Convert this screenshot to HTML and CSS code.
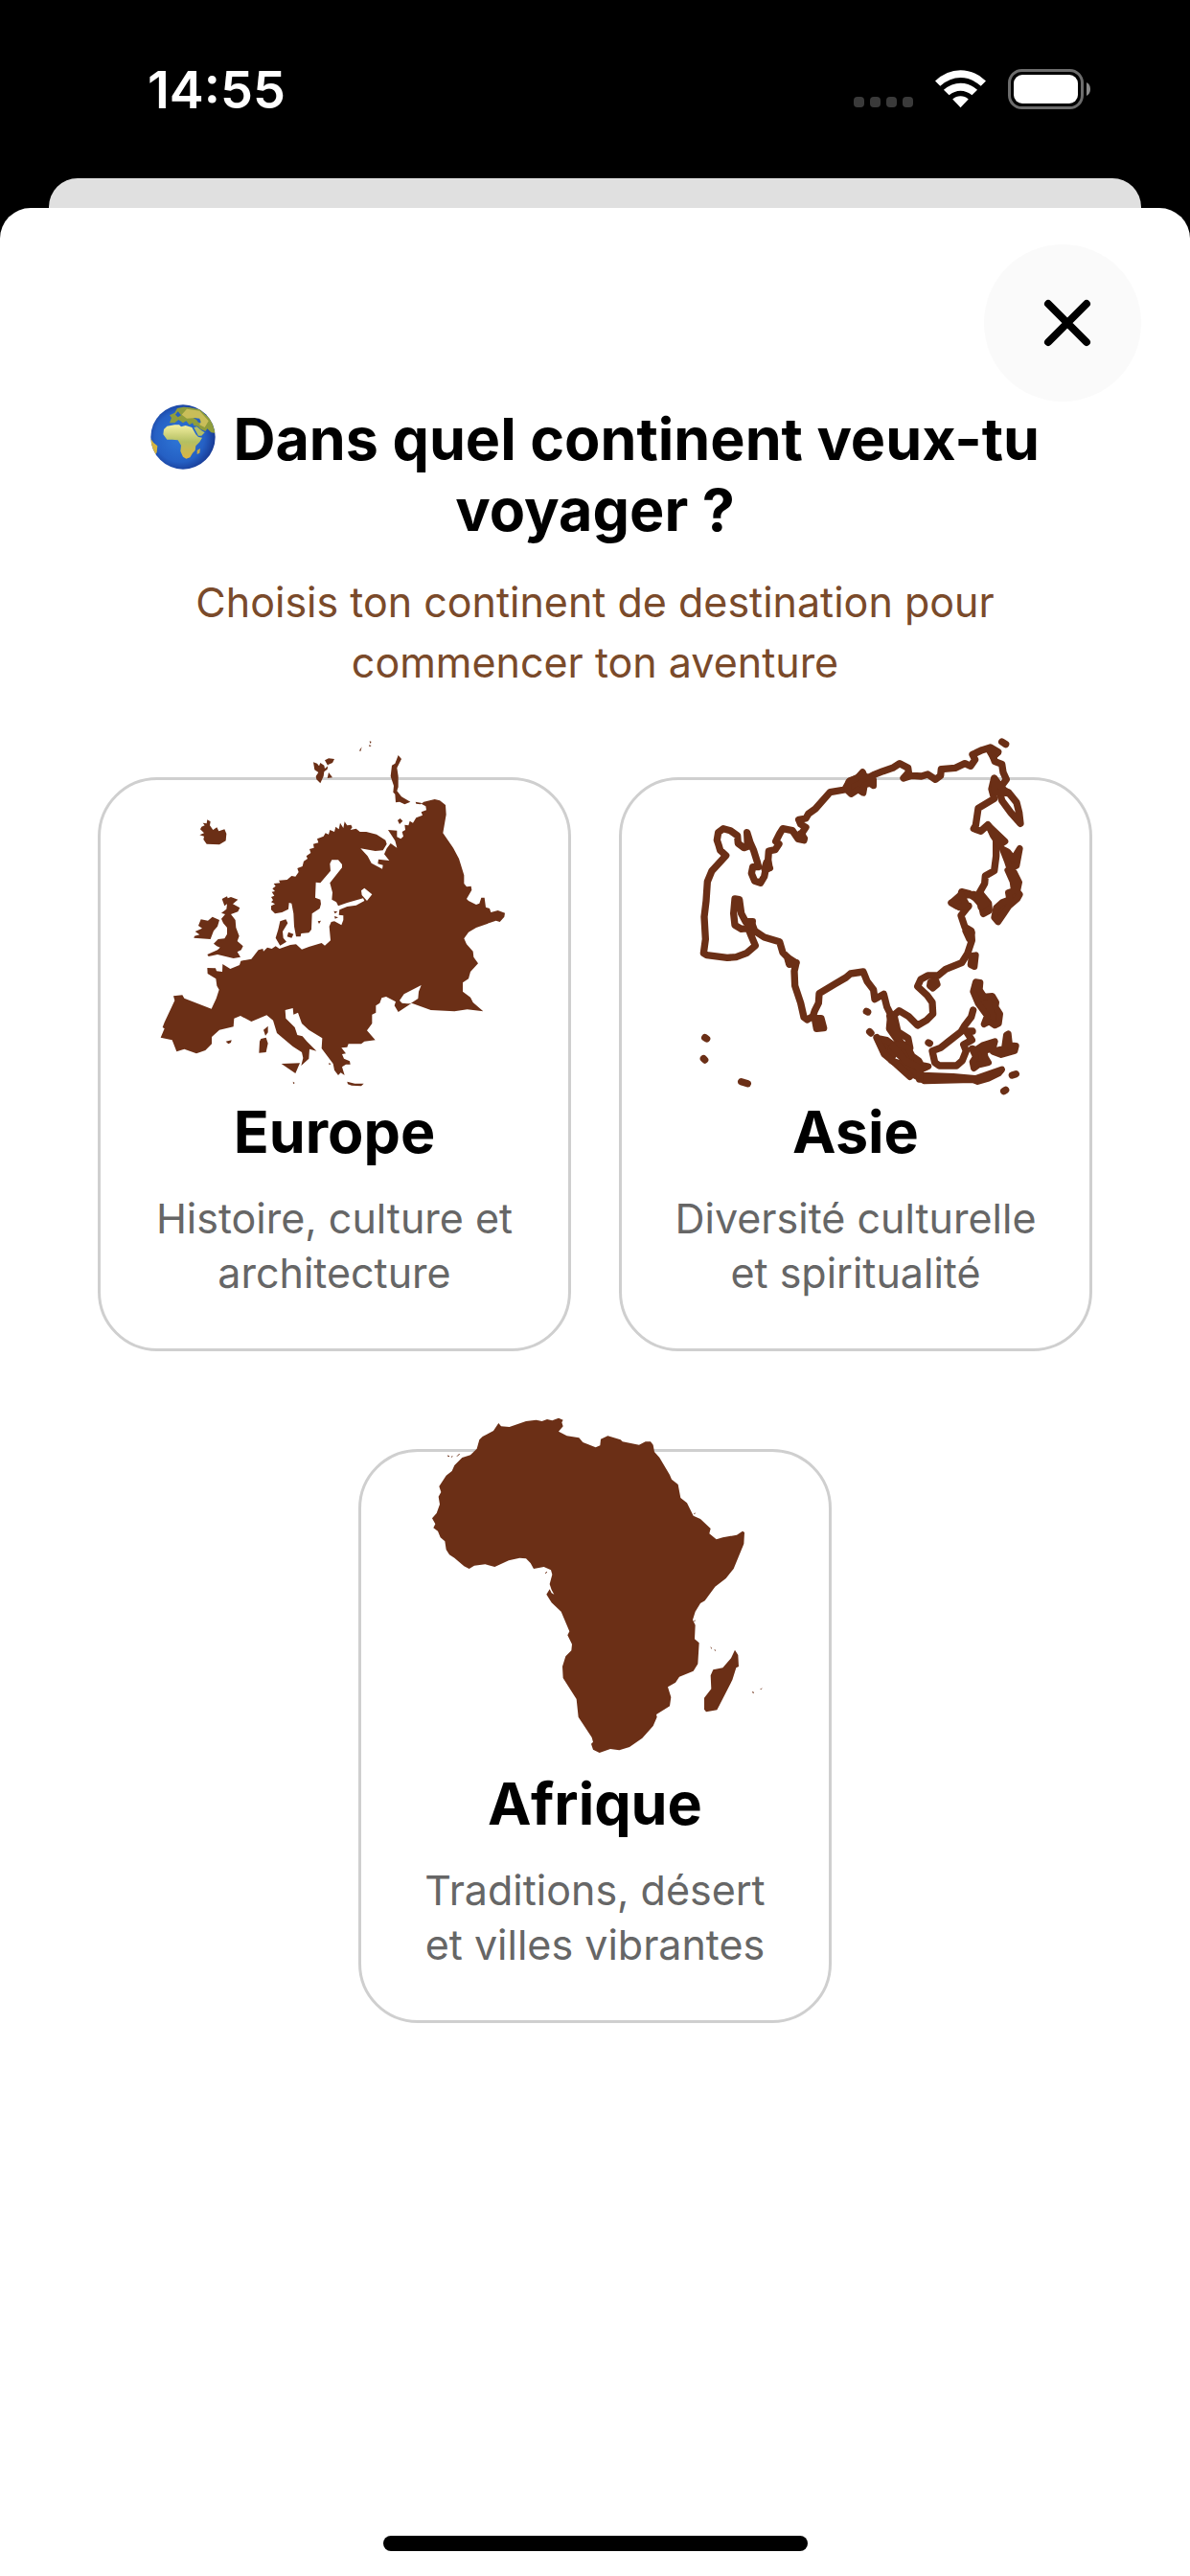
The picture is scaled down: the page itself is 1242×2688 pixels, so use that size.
FILE: index.html
```
<!DOCTYPE html>
<html lang="fr">
<head>
    <meta charset="UTF-8">
    <meta name="viewport" content="width=device-width, initial-scale=1">
    <title>Choix du continent</title>
    <link rel="stylesheet" href="styles.css">
</head>
<body>
<div class="status">
    <span class="time">14:55</span>
    <div class="status-icons">
        <svg class="dots" viewBox="0 0 62 42" aria-hidden="true">
            <rect x="0" y="29" width="11" height="11" rx="4"/>
            <rect x="17" y="29" width="11" height="11" rx="4"/>
            <rect x="34" y="29" width="11" height="11" rx="4"/>
            <rect x="51" y="29" width="11" height="11" rx="4"/>
        </svg>
        <svg class="wifi" viewBox="0 0 160 120" aria-hidden="true">
            <path d="M0 34Q36 0 80 0T160 34L144 50Q114 24 80 24T16 50Z"/>
            <path d="M27 62Q52 41 80 41T133 62L116 79Q99 65 80 65T44 79Z"/>
            <path d="M55 92Q66 82 80 82T105 92L80 118Z"/>
        </svg>
        <svg class="battery" viewBox="0 0 88 42" aria-hidden="true">
            <rect class="battery-frame" x="1.5" y="1.5" width="76" height="39" rx="13"/>
            <rect class="battery-level" x="6" y="6" width="67" height="30" rx="9"/>
            <path class="battery-cap" d="M82 14Q86 16 86 21T82 28Z"/>
        </svg>
    </div>
</div>
<div class="behind"></div>
<main class="sheet">
    <div class="sheet-top">
        <button class="close" type="button" aria-label="Fermer">
            <svg viewBox="0 0 164 164" aria-hidden="true">
                <path d="M67 62L107 102M107 62L67 102"/>
            </svg>
        </button>
    </div>
    <h1 class="title">
        <svg class="globe" viewBox="36 40 204 204" aria-hidden="true">
            <defs>
                <radialGradient id="sea" cx="0.45" cy="0.5" r="0.55">
                    <stop offset="0" stop-color="#2f78d8"/>
                    <stop offset="0.7" stop-color="#2560c4"/>
                    <stop offset="1" stop-color="#183a94"/>
                </radialGradient>
                <linearGradient id="land" x1="0" y1="0" x2="0" y2="1">
                    <stop offset="0" stop-color="#f3efa0"/>
                    <stop offset="0.5" stop-color="#b4bf62"/>
                    <stop offset="1" stop-color="#dcb543"/>
                </linearGradient>
                <clipPath id="disc"><circle cx="138" cy="142" r="101"/></clipPath>
            </defs>
            <circle cx="138" cy="142" r="101" fill="url(#sea)"/>
            <g clip-path="url(#disc)">
                <path fill="#8f9d3c" d="M96 98L102 82 96 74 112 66 120 52 140 48 160 50 190 56 226 88 240 130 226 128 214 116 208 124 194 118 184 108 172 106 168 98 158 104 148 92 138 98 124 88 112 98Z"/>
                <path fill="#c9be59" d="M150 54L190 60 218 92 206 112 190 104 194 90 176 82 150 84 134 72Z"/>
                <path fill="#2560c4" d="M170 82L190 84 194 98 186 96 180 88ZM122 62L132 74 122 80 114 72Z"/>
                <path fill="url(#land)" d="M88 108L112 104 126 104 132 110 146 106 166 112 178 134 186 142 198 144 190 158 178 170 176 184 168 192 160 206 148 210 138 204 130 186 132 168 122 152 104 150 88 150 76 134 78 118Z"/>
                <path fill="#b4bf62" d="M172 112L182 110 196 122 206 128 196 138 186 138Z"/>
                <path fill="#c9ab46" d="M182 184L192 178 190 192 182 196Z"/>
                <path fill="#d6b53f" d="M36 146L46 160 58 170 56 190 48 204 36 180Z"/>
            </g>
        </svg>
        Dans quel continent veux-tu voyager&nbsp;?
    </h1>
    <p class="subtitle">Choisis ton continent de destination pour commencer ton aventure</p>

    <div class="cards">
        <button class="card" type="button">
            <svg class="map" viewBox="0 0 1200 1155" aria-hidden="true">
                <!-- continent -->
                <path d="M96 838L124 835 130 845 215 878 230 846 239 818 232 806 229 784 203 768 202 750 228 751 231 760 249 762 250 738 274 753 303 741 307 728 340 722 362 694 376 690 378 698 390 686 404 690 416 682 428 690 462 678 480 676 498 692 520 684 560 672 570 680 588 664 584 620 590 606 600 604 622 616 628 600 628 586 614 584 616 568 640 558 668 554 694 540 690 532 640 546 612 556 606 544 592 536 594 514 586 484 624 436 624 426 612 412 592 412 586 424 588 446 556 484 542 482 540 530 556 536 558 550 554 564 530 580 528 630 520 640 496 642 494 652 480 652 474 620 472 580 466 548 458 546 456 566 436 576 414 580 402 568 402 556 414 550 402 544 408 538 402 528 412 524 404 512 414 510 406 502 416 494 410 486 430 484 426 476 452 474 466 462 478 464 488 450 484 438 500 432 504 416 516 408 512 400 526 390 522 378 536 374 534 362 550 358 546 346 566 338 572 328 582 332 586 318 600 324 604 308 614 316 618 296 628 312 632 292 640 304 652 302 656 310 650 318 668 314 680 324 700 324 732 332 760 350 764 362 752 382 728 384 682 376 704 400 716 422 750 440 752 428 736 424 738 410 772 414 756 394 764 376 776 360 796 374 790 352 768 318 796 320 796 340 808 346 816 338 812 324 822 318 820 302 832 304 836 290 846 296 856 280 876 272 872 262 888 256 886 244 872 236 880 230 914 222 930 226 948 240 950 270 940 328 972 374 990 408 1006 460 1006 486 1014 496 1028 494 1030 506 1014 534 1020 540 1044 552 1054 548 1060 530 1070 530 1074 560 1086 564 1090 576 1112 570 1134 578 1132 590 1118 606 1106 602 1044 624 1020 638 1006 658 1014 676 1034 698 1036 716 1050 736 1026 762 1020 784 1002 796 1002 824 1026 842 1034 858 1066 886 1016 880 976 886 902 882 842 860 800 888 788 868 792 856 762 840 748 844 742 860 730 868 730 890 718 896 718 924 702 946 728 976 694 980 684 988 644 988 640 998 622 1000 636 1018 624 1020 630 1034 648 1042 650 1052 636 1052 624 1060 632 1086 620 1078 612 1086 600 1070 596 1050 560 1002 562 970 520 944 498 924 486 890 472 896 470 876 446 882 448 908 476 936 484 960 500 964 514 980 544 1010 522 1004 520 1034 496 1056 502 1032 498 1014 470 996 420 954 408 914 388 898 340 918 306 900 286 908 284 934 240 944 216 966 216 988 196 1008 168 1018 130 1004 106 1012 92 976 56 968 68 940 62 936 68 920 100 852Z"/>
                <!-- islands and northern seas -->
                <path d="M184 308L194 304 188 296 200 298 202 286 212 292 210 304 220 318 232 310 238 322 256 316 262 330 260 352 240 364 200 362 190 348 192 338 178 334 192 328 180 316Z"/>
                <path d="M534 106L546 110 552 118 556 108 568 116 570 126 580 118 570 100 582 94 600 96 594 108 580 114 578 128 568 136 566 150 556 172 544 160 542 150 550 138 538 130ZM582 138L594 154 578 156ZM678 70L686 58 682 72ZM710 40L716 42 712 48ZM708 52L716 54 710 58Z"/>
                <path d="M800 84L810 96 796 124 800 150 800 184 796 196 810 214 838 230 820 238 804 230 792 232 790 206 784 200 786 180 776 150 780 116 790 110ZM854 230L874 234 870 238 856 236ZM798 288L806 282 814 290 804 300Z"/>
                <path d="M248 534L264 526 266 532 276 528 298 536 282 550 304 562 298 574 276 582 290 600 292 624 302 650 296 666 314 682 308 694 296 700 306 716 284 720 234 708 206 714 202 708 234 694 242 686 232 682 222 674 236 660 256 658 264 644 264 624 252 610 246 596 258 582 246 578 262 566 264 550 256 556Z"/>
                <path d="M182 598L204 602 218 590 240 600 234 620 222 634 212 660 160 656 162 650 178 646 164 636 186 626 174 618Z"/>
                <path d="M430 604L448 598 454 610 438 636 440 656 450 668 430 680 416 656 424 630ZM456 638L472 644 466 656 452 652ZM548 604L558 602 552 612ZM598 572L610 574 602 580ZM600 588L612 592 602 596Z"/>
                <path d="M378 944L392 932 392 952 384 962ZM370 972L386 968 392 986 386 1014 364 1016 366 980ZM260 980L278 976 276 984 268 988ZM434 1050L492 1048 478 1080ZM470 1106L476 1110 472 1114ZM640 1106L664 1112 692 1112 684 1120 654 1118 642 1114ZM582 1048L590 1050 584 1054Z"/>
                <path class="water" d="M684 508L694 500 718 520 702 540 686 522ZM804 852L818 832 872 804 864 824 862 846 838 862 828 862 812 860Z"/>
            </svg>
            <span class="card-title">Europe</span>
            <span class="card-text">Histoire, culture et architecture</span>
        </button>

        <button class="card" type="button">
            <svg class="map map-outline" viewBox="-26 0 1200 1155" aria-hidden="true">
                <!-- mainland coast, from the Black Sea eastwards -->
                <path d="M168 398L150 382 146 368 140 350 144 326 160 314 182 320 204 336 206 360 224 374 236 370 234 326 244 358 254 380 266 418 270 434 252 434 248 454 258 478 276 484 288 464 292 444 304 436 300 412 302 384 322 380 334 362 324 354 336 330 346 314 376 320 394 346 412 350 406 328 418 310 402 300 396 286 418 282 426 268 448 252 494 200 540 192 556 164 580 156 596 138 604 160 630 146 660 134 690 124 712 110 738 124 740 138 724 156 750 148 780 150 800 144 824 160 840 148 842 128 886 124 916 110 934 118 948 98 940 82 970 68 996 60 1020 74 1004 88 1010 104 1032 112 1036 138 1046 160 1028 184 1008 156 1000 190 1008 220 958 250 950 304 944 314 966 322 988 302 1014 344 1014 400 1008 446 980 462 978 486 962 514 990 548 992 570 974 580 968 552 950 532 930 518 906 512 902 534 874 546 900 560 928 556 904 586 916 622 936 634 938 664 924 706 906 734 856 754 832 774 800 774 778 786 768 808 798 836 814 858 816 894 796 914 768 930 740 902 710 884 694 898 706 950 738 970 744 1000 730 996 708 980 680 940 684 896 672 872 662 832 634 848 630 818 610 792 598 762 558 768 544 780 510 800 460 830 458 860 446 884 440 902 422 912 412 904 402 860 384 806 382 760 388 734 366 738 360 716 346 702 336 668 288 654 258 634 248 608 230 606 216 580 210 536 196 534 192 580 196 616 216 628 238 626 244 642 260 680 232 704 200 716 172 718 108 710 98 704 104 660 100 590 106 540 110 480 124 446Z"/>
                <path d="M446 908L452 940 474 938 466 908ZM1022 190L1032 226 1060 264 1090 298 1086 264 1078 232 1052 200ZM900 536L916 522 944 520"/>
                <!-- Severnaya coast and Kamchatka, thick spots -->
                <path class="solid" d="M552 168L594 146 630 160 630 180 618 172 602 178 598 202 582 192 560 206 550 196ZM990 66L1020 76 1004 90ZM1008 164L1030 184 1052 204 1010 200ZM990 304L1042 354 1024 366 1004 336ZM874 546L904 520 926 560 890 556ZM294 420L306 438 288 440ZM400 330L414 344 396 344ZM232 604L252 604 248 622ZM958 520L984 546 966 560ZM360 716L388 734 368 740ZM680 900L694 950 720 990 704 960ZM918 634L938 640 930 660Z"/>
                <!-- Japan, Taiwan -->
                <path class="solid" d="M1034 378L1050 386 1068 408 1088 376 1078 430 1056 438 1048 414ZM1050 444L1070 450 1086 482 1080 510 1088 520 1080 534 1054 556 1038 580 1020 606 1008 592 1014 562 1034 544 1056 536 1052 514 1070 508 1066 480ZM938 712L950 710 946 746 934 740ZM808 794L826 790 830 802 816 814 806 806Z"/>
                <path d="M1032 42L1044 50"/>
                <!-- Philippines, Borneo, Sumatra, Java -->
                <path class="solid" d="M950 794L964 796 962 818 976 840 1002 838 1014 858 1012 872 1026 894 1022 924 1010 930 992 918 976 926 986 900 958 862 942 824ZM642 970L672 976 690 990 712 988 738 1000 752 1026 772 1040 780 1054 802 1058 784 1066 760 1056 730 1040 706 1020 684 1004 690 1028 664 1018ZM938 1002L952 1006 972 992 1010 980 1004 1002 976 1010 980 1030 990 1046 958 1054 944 1064 940 1044 950 1028ZM686 1040L712 1048 744 1070 784 1086 880 1090 950 1096 1032 1068 1022 1080 990 1096 956 1106 940 1100 790 1104 744 1078ZM1046 960L1052 956 1056 992 1076 994 1072 1010 1030 1022 1004 1012 1040 1002Z"/>
                <path d="M942 882L936 904 916 930 904 950 868 978 840 1000 814 1010 822 1046 836 1056 890 1056 908 1040 920 1010 912 990 938 976 920 948 940 948M640 968L664 1020 700 1050 744 1090M690 996L730 1040 776 1064 774 1098"/>
                <path d="M102 968L108 972M98 1034L102 1038M216 1106L236 1112M608 886L612 888M618 950L622 954M802 984L806 986M1064 1086L1076 1082M1038 1136L1044 1132"/>
            </svg>
            <span class="card-title">Asie</span>
            <span class="card-text">Diversité culturelle et spiritualité</span>
        </button>

        <button class="card" type="button">
            <svg class="map" viewBox="0 0 1200 1155" aria-hidden="true">
                <path d="M298 72L306 82 332 84 384 66 416 62 434 66 450 60 466 64 486 56 500 62 496 70 500 82 486 98 512 112 550 118 562 132 602 148 616 142 618 122 640 112 680 124 686 130 738 140 758 130 774 130 782 140 786 162 802 180 834 234 840 248 860 264 868 306 888 322 908 362 930 372 962 402 958 418 980 436 1000 430 1044 422 1062 410 1068 414 1066 450 1034 528 1010 558 976 584 944 628 930 636 914 662 906 688 914 704 912 748 926 760 922 826 908 848 864 866 852 884 828 898 838 930 834 958 792 984 794 992 782 1020 748 1058 708 1086 676 1096 648 1092 614 1104 594 1094 588 1076 594 1070 590 1056 548 992 542 936 500 870 498 834 508 802 526 784 528 764 514 736 520 724 494 662 464 634 448 608 458 592 464 604 472 608 464 594 458 576 466 546 462 532 440 522 408 528 398 510 384 496 364 494 330 502 286 522 256 514 222 518 206 528 190 520 160 494 144 484 134 468 130 442 116 430 108 410 94 400 100 388 90 370 104 354 114 326 110 302 118 288 112 270 134 236 152 222 160 204 184 180 210 172 230 152 238 124 248 114 282 96Z"/>
                <path d="M1038 782L1048 798 1050 834 1042 838 1030 876 982 970 948 976 942 968 942 932 964 904 962 862 970 844 1000 838 1026 808Z"/>
                <path class="specks" d="M138 174L144 176M150 178L154 176M168 176L176 168M444 542L450 538M962 774L966 778M974 782L978 784M1092 914L1098 916M1118 906L1122 902M910 356L914 354M910 692L914 690"/>
            </svg>
            <span class="card-title">Afrique</span>
            <span class="card-text">Traditions, désert et&nbsp;villes vibrantes</span>
        </button>
    </div>
    <div class="home-bar"></div>
</main>
</body>
</html>
```
FILE: styles.css
```
* {
    margin: 0;
    padding: 0;
    box-sizing: border-box;
}

body {
    display: flex;
    flex-direction: column;
    min-height: 100vh;
    background-color: #000;
    color: #000;
    font-family: Inter, "Liberation Sans", sans-serif;
}

button {
    border: none;
    background: none;
    color: inherit;
    font: inherit;
    cursor: pointer;
}

/* status bar */
.status {
    display: flex;
    justify-content: space-between;
    align-items: center;
    height: 186px;
    padding: 0 102px 0 154px;
    color: #fff;
}

.time {
    font-size: 54px;
    font-weight: 600;
}

.status-icons {
    display: flex;
    align-items: center;
    gap: 23px;
}

.dots {
    width: 62px;
    height: 42px;
    fill: #3a3a3a;
}

.wifi {
    width: 53px;
    height: 40px;
    fill: #fff;
}

.battery {
    width: 88px;
    height: 42px;
}

.battery-frame {
    fill: none;
    stroke: #6c6c6c;
    stroke-width: 3;
}

.battery-level {
    fill: #fff;
}

.battery-cap {
    fill: #8a8a8a;
}

/* page left visible behind the sheet */
.behind {
    height: 31px;
    margin: 0 51px;
    border-radius: 30px 30px 0 0;
    background-color: #e0e0e0;
}

.sheet {
    display: flex;
    flex: 1;
    flex-direction: column;
    border-radius: 32px 32px 0 0;
    background-color: #fff;
    text-align: center;
}

.sheet-top {
    display: flex;
    justify-content: flex-end;
    padding: 38px 51px 0;
}

.close {
    width: 164px;
    height: 164px;
    border-radius: 50%;
    background-color: #fafafa;
}

.close svg {
    display: block;
    fill: none;
    stroke: #000;
    stroke-width: 8;
    stroke-linecap: round;
}

.title {
    padding: 2px 102px 0;
    font-size: 61px;
    font-weight: 700;
    line-height: 74px;
}

.globe {
    width: 68px;
    height: 68px;
    margin-right: 4px;
    vertical-align: -10px;
}

.subtitle {
    margin-top: 28px;
    padding: 0 180px;
    color: #7a4a2a;
    font-size: 43px;
    line-height: 63px;
}

/* continents */
.cards {
    display: flex;
    flex-wrap: wrap;
    justify-content: center;
    gap: 102px 50px;
    margin-top: 88px;
    padding: 0 102px;
}

.card {
    display: flex;
    flex-direction: column;
    align-items: center;
    width: calc(50% - 25px);
    padding: 0 36px 50px;
    border: 3px solid #cfcfcf;
    border-radius: 62px;
}

.map {
    width: 400px;
    height: 385px;
    margin-top: -54px;
    fill: #6b2f16;
}

.map .water {
    fill: #fff;
}

.map .specks {
    stroke: #6b2f16;
    stroke-width: 3;
}

.map-outline {
    fill: none;
    stroke: #6b2f16;
    stroke-width: 22;
    stroke-linejoin: round;
    stroke-linecap: round;
}

.map-outline .solid {
    fill: #6b2f16;
    stroke-width: 20;
}

.card-title {
    font-size: 61px;
    font-weight: 700;
    line-height: 72px;
}

.card-text {
    margin-top: 26px;
    color: #666;
    font-size: 43px;
    line-height: 57px;
}

.home-bar {
    width: 443px;
    height: 16px;
    margin: auto auto 26px;
    border-radius: 8px;
    background-color: #000;
}
```
